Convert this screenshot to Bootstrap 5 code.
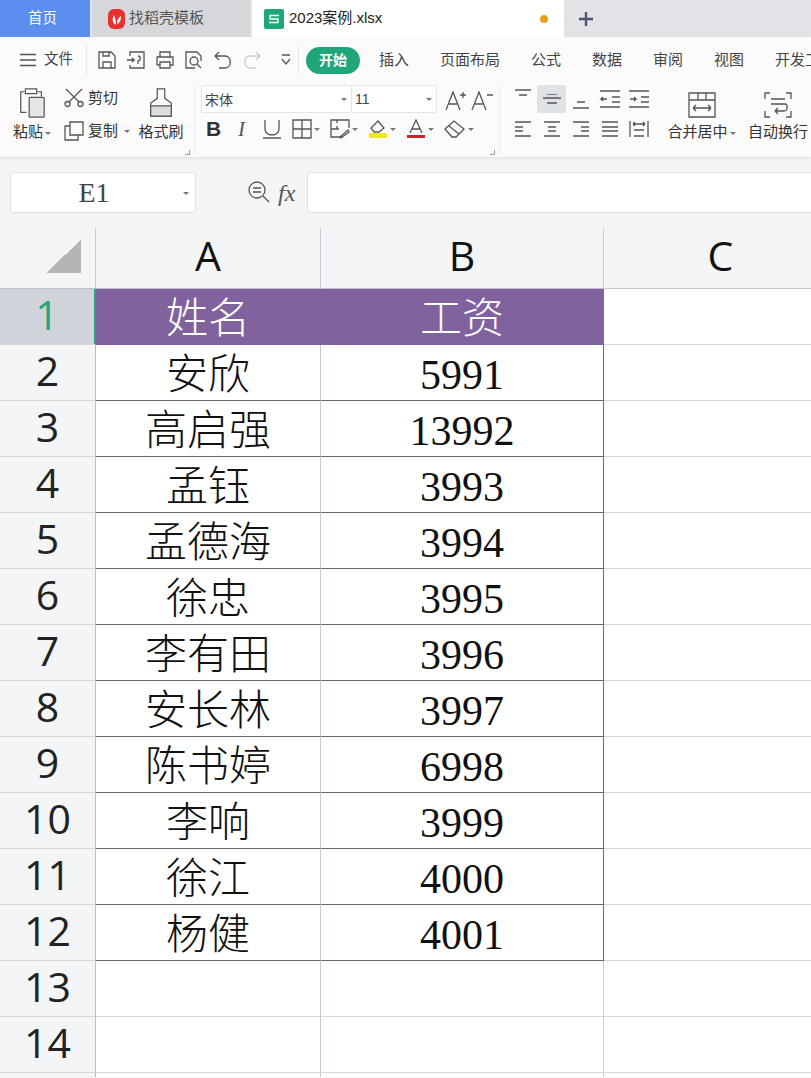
<!DOCTYPE html>
<html lang="zh"><head><meta charset="utf-8"><title>2023案例.xlsx</title>
<link href="https://cdn.jsdelivr.net/npm/bootstrap@5.3.0/dist/css/bootstrap.min.css" rel="stylesheet">
<style>
html,body{height:100%;overflow:hidden}
body{background:#f4f5f7;font-family:"Liberation Sans","Noto Sans CJK SC",sans-serif;color:#333;font-size:14.5px;width:811px}
svg{display:block;flex:none;fill:none;stroke:#555;stroke-width:1.3}
.tabbar{height:37px;background:#e1e3e7}
.tab-home{width:90px;background:#5b8def;color:#fff;padding-left:28px}
.tab-tpl{width:158px;margin-left:2px;background:#d6d7db;color:#555;padding-left:15px;gap:3px;font-size:15px}
.tab-doc{width:312px;margin-left:2px;background:#fff;color:#222;padding-left:12px;gap:5px;font-size:15px}
.dot-mod{width:8px;height:8px;border-radius:50%;background:#e5a024;margin-left:auto;margin-right:16px}
.add-tab{margin-left:14px}
.ribbon{height:120px;background:#fbfbfc;box-shadow:0 1px 3px rgba(0,0,0,.1);overflow:hidden;white-space:nowrap}
.menurow{height:46px;padding-left:19px;color:#444;font-size:15px}
.menurow>*{flex:none}
.file-lbl{margin:0 13px 0 7px;font-size:14.5px}
.vsep{width:1px;height:30px;background:#e6e6e8}
.qa{gap:9px;margin:0 0 0 10px;width:201px}
.start-pill{background:#21a67a;color:#fff;border-radius:14px;width:54px;height:27px;font-weight:700;font-size:14px;margin-left:7px}
.menu-i{margin-left:31px}
.menu-first{margin-left:19px}
.tools{height:74px;padding-top:2px}
.grp{height:70px;flex:none;position:relative;border-right:1px solid #ececee}
.grp-clip{width:195px}
.grp-font{width:305px;padding-left:6px}
.grp-align{flex:none;padding-left:8px}
.corner{position:absolute;right:4px;bottom:0;width:5px;height:5px;border-right:1px solid #999;border-bottom:1px solid #999}
.lbl{font-size:15px;color:#333;line-height:18px}
.caret-s{display:inline-block;border:3px solid transparent;border-top:3px solid #777;border-bottom:0;margin-left:2px;vertical-align:middle}
.paste{width:40px;margin-left:12px}
.paste svg,.brush svg{margin:3px auto 5px}
.cutcopy{margin-left:12px;width:74px;padding-top:3px;gap:13px}
.brush{width:46px}
.combo{height:28px;background:#fff;border:1px solid #e4e5e8;font-size:14px;color:#444;padding:0 4px 0 3px;border-radius:2px}
.combo-a{width:151px;font-family:"Noto Sans CJK SC",sans-serif}
.combo-b{width:85px;border-left:0}
.f-icons{gap:10px;margin-top:2px;padding-left:5px;height:28px}
.f-b{font:700 21px "Liberation Sans",sans-serif;color:#333;width:18px}
.f-i{font:italic 21px "Liberation Serif",serif;color:#555;width:10px}
.align-rows{width:145px;row-gap:2px;align-content:flex-start}
.aln{width:29px;height:28px}
.aln-on{background:#dfe2e6;border-radius:2px}
.big{flex:none;text-align:center}
.big svg{margin:7px auto 5px}
.big-a{width:71px;margin-left:13px}
.big-b{width:62px;margin-left:10px}
.fbar{height:71px;padding:15px 0 0 10px}
.namebox{width:186px;height:41px;background:#fff;border:1px solid #dfe1e5;border-radius:3px;position:relative;font:28px "Liberation Serif",serif;color:#444;line-height:40px;text-align:center;padding-right:18px}
.namebox .caret-s{position:absolute;right:6px;top:19px}
.fx{font:italic 24px "Liberation Serif",serif;color:#555;margin:0 9px 0 8px;width:20px;line-height:34px}
.zoom-i{margin-left:52px}
.finput{flex:1;height:41px;background:#fff;border:1px solid #dfe1e5;border-right:0;border-radius:3px 0 0 3px}
.grid-sheet{table-layout:fixed;border-collapse:separate;border-spacing:0;width:838px;max-width:none}
.grid-sheet td,.grid-sheet th{height:56px;padding:0;text-align:center;vertical-align:middle;border-right:1px solid #cbcad6;border-bottom:1px solid #d6d6dc;background:#fff}
.grid-sheet td{font:300 42px/1 "Liberation Serif","Noto Sans CJK SC",serif;color:#111;padding-top:4px}
.grid-sheet th.hd-c{height:61px;background:#f4f5f7;font:400 41px/1 "Open Sans",sans-serif;color:#111;border-bottom:1px solid #bfc1cf;padding-bottom:6px}
.grid-sheet th.hd-r{background:#f4f5f7;font:400 41px/1 "Open Sans",sans-serif;color:#222;border-right:1px solid #b9bbcc;padding-bottom:4px}
.grid-sheet td.dt{border-bottom-color:#6a6478}
.grid-sheet td.dt-b{border-right-color:#6a6478}
.grid-sheet td.pur{background:#80629f;color:#fff;border-bottom-color:#80629f;border-right-color:#80629f}
.grid-sheet th.act{background:#d0d3d9;color:#22a67a;border-right:2px solid #22a67a}
.grid-sheet th.cn{position:relative}
.grid-sheet tr.tail-row>*{height:4px;padding:0;font-size:0;line-height:0;border-bottom:0}
.tri{position:absolute;right:14px;bottom:15px;width:34px;height:34px;background:linear-gradient(135deg,transparent 50%,#b5b5b5 50%)}
</style></head><body>

<div class="tabbar d-flex">
  <div class="tab-home d-flex align-items-center">首页</div>
  <div class="tab-tpl d-flex align-items-center">
    <svg width="19" height="20" viewBox="0 0 19 20" style="stroke:none"><rect x="1" y="0" width="17" height="20" rx="6" fill="#e8312f"/><path d="M9 16C5 14 5 9 7 6c1 3 2 5 2 10zM10 15c0-4 1-6 4-8 0 4-1 7-4 8z" fill="#fff"/></svg>
    找稻壳模板</div>
  <div class="tab-doc d-flex align-items-center">
    <svg width="20" height="20" viewBox="0 0 20 20" style="stroke:none"><rect width="20" height="20" rx="2" fill="#1fa67a"/><path d="M15 6.500H6v3.500h8v3.500H5" fill="none" stroke="#fff" stroke-width="1.300"/></svg>
    2023案例.xlsx<span class="dot-mod"></span></div>
  <div class="add-tab d-flex align-items-center"><svg width="16" height="16" viewBox="0 0 16 16" style="stroke:#4d5570;stroke-width:2.400"><path d="M8 1v14M1 8h14"/></svg></div>
</div>

<div class="ribbon">
  <div class="menurow d-flex align-items-center">
    <svg width="18" height="14" viewBox="0 0 18 14"><path d="M1 1.500h16M1 7h16M1 12.500h16"/></svg>
    <span class="file-lbl">文件</span><span class="vsep"></span>
    <div class="qa d-flex align-items-center">
      <svg width="20" height="20" viewBox="0 0 20 20"><path d="M2 2h12l4 4v12H2zM6 18v-6h8v6M6 2v4h6V2"/></svg>
      <svg width="20" height="20" viewBox="0 0 20 20"><path d="M4 6V2h14v16H4v-3M1 10h7l-2-2M8 10l-2 2M12 6c3 0 3 5 0 5v3"/></svg>
      <svg width="20" height="20" viewBox="0 0 20 20"><path d="M5 7V2h10v5M2 15V7h16v8h-3M5 15H2M5 12h10v6H5z"/></svg>
      <svg width="20" height="20" viewBox="0 0 20 20"><path d="M11 18H2V2h11l4 4v5"/><circle cx="10" cy="11" r="4"/><path d="M13 14l4 4"/></svg>
      <svg width="20" height="20" viewBox="0 0 20 20"><path d="M6 2L2 6l4 4M2 6h10c7 0 7 12 0 12H6"/></svg>
      <svg width="20" height="20" viewBox="0 0 20 20" style="stroke:#c8cacd"><path d="M14 2l4 4-4 4M18 6H8c-7 0-7 12 0 12h6"/></svg>
      <svg width="14" height="12" viewBox="0 0 14 12" class="ms-2"><path d="M3 1h8M3 5l4 5 4-5"/></svg>
    </div>
    <span class="vsep"></span>
    <span class="start-pill d-flex align-items-center justify-content-center">开始</span>
    <span class="menu-first">插入</span><span class="menu-i">页面布局</span><span class="menu-i">公式</span><span class="menu-i">数据</span><span class="menu-i">审阅</span><span class="menu-i">视图</span><span class="menu-i">开发工具</span>
  </div>
  <div class="tools d-flex">
    <div class="grp grp-clip d-flex">
      <div class="paste text-center"><svg width="28" height="30" viewBox="0 0 28 32"><path d="M6 4H2v22h6M20 4h4v5M7 1h12v5H7z"/><rect x="11" y="10" width="16" height="21" rx="1" fill="#e6e6e6"/></svg><div class="lbl">粘贴<i class="caret-s"></i></div></div>
      <div class="cutcopy d-flex flex-column">
        <div class="d-flex align-items-center gap-1 lbl"><svg width="20" height="20" viewBox="0 0 20 20"><circle cx="3.500" cy="16" r="2.500"/><circle cx="16.500" cy="16" r="2.500"/><path d="M2 1l13 13M18 1L5 14"/></svg>剪切</div>
        <div class="d-flex align-items-center gap-1 lbl"><svg width="20" height="20" viewBox="0 0 20 20"><path d="M6 5h-5v14h13v-5M6 1h13v13H6z"/></svg>复制<i class="caret-s"></i></div>
      </div>
      <div class="brush text-center"><svg width="24" height="30" viewBox="0 0 24 32"><path d="M8 1h8v10l7 5v14H1V16l7-5z"/><path d="M1 19h22v11H1z" fill="#ddd"/></svg><div class="lbl">格式刷</div></div>
      <span class="corner"></span>
    </div>
    <div class="grp grp-font">
      <div class="d-flex">
        <div class="combo combo-a d-flex align-items-center justify-content-between">宋体<i class="caret-s"></i></div>
        <div class="combo combo-b d-flex align-items-center justify-content-between">11<i class="caret-s"></i></div>
        <svg width="22" height="22" viewBox="0 0 22 22" class="ms-2 mt-1"><path d="M1 21L8 3l7 18M4 15h8M15 6h6M18 3v6"/></svg>
        <svg width="22" height="22" viewBox="0 0 22 22" class="ms-1 mt-1"><path d="M1 21L8 3l7 18M4 15h8M16 6h6"/></svg>
      </div>
      <div class="f-icons d-flex align-items-center">
        <span class="f-b">B</span>
        <span class="f-i ms-1">I</span>
        <svg width="20" height="20" viewBox="0 0 20 20" class="ms-1"><path d="M3 1v9c0 8 14 8 14 0V1M1 19h18"/></svg>
        <span class="d-flex align-items-center"><svg width="20" height="20" viewBox="0 0 20 20"><path d="M1 1h18v18H1zM10 1v18M1 10h18"/></svg><i class="caret-s"></i></span>
        <span class="d-flex align-items-center"><svg width="20" height="20" viewBox="0 0 20 20"><path d="M12 18H1V1h18v8M7 1v3M7 7v3M1 10h8"/><path d="M10 18l8-7 1 2-8 6z"/></svg><i class="caret-s"></i></span>
        <span class="d-flex align-items-center"><svg width="20" height="20" viewBox="0 0 20 20"><path d="M3 9l7-7 6 7-5 4H6z"/><rect x="1" y="14" width="18" height="5" fill="#f5e326" stroke="none"/></svg><i class="caret-s"></i></span>
        <span class="d-flex align-items-center"><svg width="20" height="20" viewBox="0 0 20 20"><path d="M4 14L10 1l6 13M6 10h8"/><rect x="1" y="16" width="18" height="3" fill="#c8262a" stroke="none"/></svg><i class="caret-s"></i></span>
        <span class="d-flex align-items-center"><svg width="22" height="18" viewBox="0 0 22 18"><path d="M1 9l9-8 10 8-8 8H8zM5 6l10 8"/></svg><i class="caret-s"></i></span>
      </div>
      <span class="corner"></span>
    </div>
    <div class="grp-align d-flex">
      <div class="align-rows d-flex flex-wrap">
        <div class="aln d-flex align-items-start justify-content-center pt-1"><svg width="18" height="10" viewBox="0 0 18 10"><path d="M1 1h16M5 6h8"/></svg></div>
        <div class="aln aln-on d-flex align-items-center justify-content-center"><svg width="20" height="10" viewBox="0 0 20 10"><path d="M1 4h18M5 9h10M5 0h10"/></svg></div>
        <div class="aln d-flex align-items-end justify-content-center pb-1"><svg width="18" height="10" viewBox="0 0 18 10"><path d="M5 3h8M1 9h16"/></svg></div>
        <div class="aln d-flex align-items-center justify-content-center"><svg width="22" height="18" viewBox="0 0 22 18"><path d="M1 1h20M13 7h8M13 12h8M1 17h20M8 9H2l2-2M2 9l2 2"/></svg></div>
        <div class="aln d-flex align-items-center justify-content-center"><svg width="22" height="18" viewBox="0 0 22 18"><path d="M1 1h20M13 7h8M13 12h8M1 17h20M2 9h6l-2-2M8 9l-2 2"/></svg></div>
        <div class="aln d-flex align-items-center justify-content-center"><svg width="18" height="16" viewBox="0 0 18 16"><path d="M1 1h16M1 6h8M1 10h8M1 15h16"/></svg></div>
        <div class="aln d-flex align-items-center justify-content-center"><svg width="18" height="16" viewBox="0 0 18 16"><path d="M1 1h16M5 6h8M5 10h8M1 15h16"/></svg></div>
        <div class="aln d-flex align-items-center justify-content-center"><svg width="18" height="16" viewBox="0 0 18 16"><path d="M1 1h16M9 6h8M9 10h8M1 15h16"/></svg></div>
        <div class="aln d-flex align-items-center justify-content-center"><svg width="18" height="16" viewBox="0 0 18 16"><path d="M1 1h16M1 6h16M1 10h16M1 15h16"/></svg></div>
        <div class="aln d-flex align-items-center justify-content-center"><svg width="20" height="18" viewBox="0 0 20 18"><path d="M1 1v16M19 1v16M5 10h10M5 16h10M4 4h12M4 4l2-2M4 4l2 2M16 4l-2-2M16 4l-2 2"/></svg></div>
      </div>
      <div class="big big-a lbl"><svg width="28" height="26" viewBox="0 0 28 26"><path d="M1 1h26v24H1zM1 8h26M10 1v7M18 1v7M5 16h18M5 16l3-3M5 16l3 3M23 16l-3-3M23 16l-3 3"/></svg>合并居中<i class="caret-s"></i></div>
      <div class="big big-b lbl"><svg width="28" height="26" viewBox="0 0 28 26"><path d="M6 1H1v6M22 1h5v6M6 25H1v-6M22 25h5v-6M7 7h14M7 12h14c3 0 3 7-1 7h-9M11 19l3-3M11 19l3 3"/></svg>自动换行</div>
    </div>
  </div>
</div>

<div class="fbar d-flex align-items-start">
  <div class="namebox">E1<i class="caret-s"></i></div>
  <svg class="zoom-i mt-2" width="22" height="24" viewBox="0 0 22 24"><circle cx="9" cy="10" r="8"/><path d="M5 8h8M5 12h8M15 16l6 6"/></svg>
  <span class="fx mt-1">fx</span>
  <div class="finput"></div>
</div>

<table class="grid-sheet">
<colgroup><col style="width:96px"><col style="width:225px"><col style="width:283px"><col style="width:234px"></colgroup>
<thead><tr><th class="hd-c cn"><span class="tri"></span></th><th class="hd-c">A</th><th class="hd-c">B</th><th class="hd-c">C</th></tr></thead>
<tbody>
<tr><th class="hd-r act">1</th><td class="pur">姓名</td><td class="pur">工资</td><td></td></tr>
<tr><th class="hd-r">2</th><td class="dt">安欣</td><td class="dt dt-b">5991</td><td></td></tr>
<tr><th class="hd-r">3</th><td class="dt">高启强</td><td class="dt dt-b">13992</td><td></td></tr>
<tr><th class="hd-r">4</th><td class="dt">孟钰</td><td class="dt dt-b">3993</td><td></td></tr>
<tr><th class="hd-r">5</th><td class="dt">孟德海</td><td class="dt dt-b">3994</td><td></td></tr>
<tr><th class="hd-r">6</th><td class="dt">徐忠</td><td class="dt dt-b">3995</td><td></td></tr>
<tr><th class="hd-r">7</th><td class="dt">李有田</td><td class="dt dt-b">3996</td><td></td></tr>
<tr><th class="hd-r">8</th><td class="dt">安长林</td><td class="dt dt-b">3997</td><td></td></tr>
<tr><th class="hd-r">9</th><td class="dt">陈书婷</td><td class="dt dt-b">6998</td><td></td></tr>
<tr><th class="hd-r">10</th><td class="dt">李响</td><td class="dt dt-b">3999</td><td></td></tr>
<tr><th class="hd-r">11</th><td class="dt">徐江</td><td class="dt dt-b">4000</td><td></td></tr>
<tr><th class="hd-r">12</th><td class="dt">杨健</td><td class="dt dt-b">4001</td><td></td></tr>
<tr><th class="hd-r">13</th><td></td><td></td><td></td></tr>
<tr><th class="hd-r">14</th><td></td><td></td><td></td></tr>
<tr class="tail-row"><th class="hd-r"></th><td></td><td></td><td></td></tr>
</tbody></table>
</body></html>
